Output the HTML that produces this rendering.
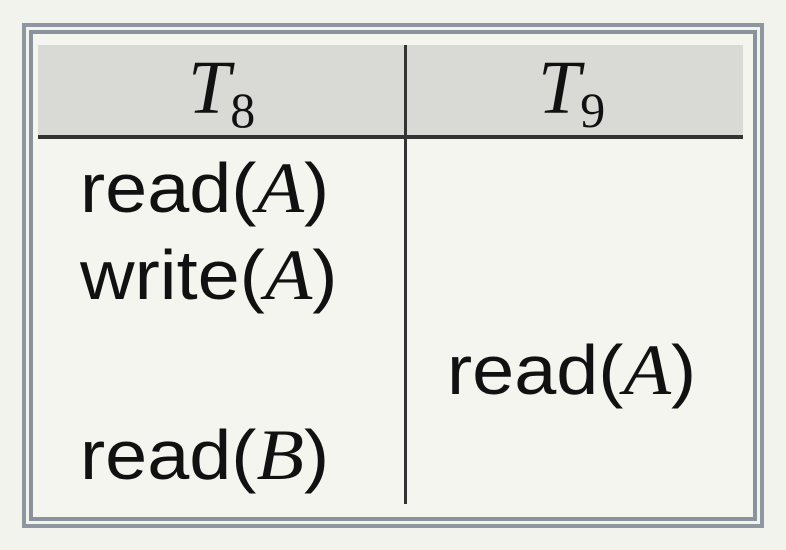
<!DOCTYPE html>
<html><head><meta charset="utf-8"><style>
html,body{margin:0;padding:0;}
body{width:786px;height:550px;background:#f2f3ed;position:relative;overflow:hidden;}
.f1{position:absolute;left:22px;top:23px;width:742px;height:505px;box-sizing:border-box;border:4px solid #8e979f;}
.f2{position:absolute;left:29px;top:30px;width:728px;height:491px;box-sizing:border-box;border:4px solid #8a939b;background:#f4f5ef;}
.hdr{position:absolute;left:38px;top:45px;width:705px;height:92px;background:#d9dad5;}
.hl{position:absolute;left:38px;top:135px;width:705px;height:4px;background:#333;}
.vl{position:absolute;left:404px;top:45px;width:3px;height:459px;background:#333;}
.t{position:absolute;font-family:"Liberation Sans",sans-serif;font-size:70px;color:#111;line-height:1;white-space:nowrap;transform:scaleX(1.08);transform-origin:0 0;}
.t i{font-family:"Liberation Serif",serif;font-size:72px;}
.h{position:absolute;font-family:"Liberation Serif",serif;font-style:italic;font-size:76px;color:#111;line-height:1;}
.h sub{font-style:normal;font-size:50px;vertical-align:-14px;}
</style></head><body>
<div class="f1"></div><div class="f2"></div>
<div class="hdr"></div><div class="hl"></div><div class="vl"></div>
<div class="h" style="left:188px;top:50px">T<sub>8</sub></div>
<div class="h" style="left:538px;top:50px">T<sub>9</sub></div>
<div class="t" style="left:80px;top:152px">read(<i>A</i>)</div>
<div class="t" style="left:80px;top:239px">write(<i>A</i>)</div>
<div class="t" style="left:447px;top:334px">read(<i>A</i>)</div>
<div class="t" style="left:80px;top:419px">read(<i>B</i>)</div>
</body></html>
